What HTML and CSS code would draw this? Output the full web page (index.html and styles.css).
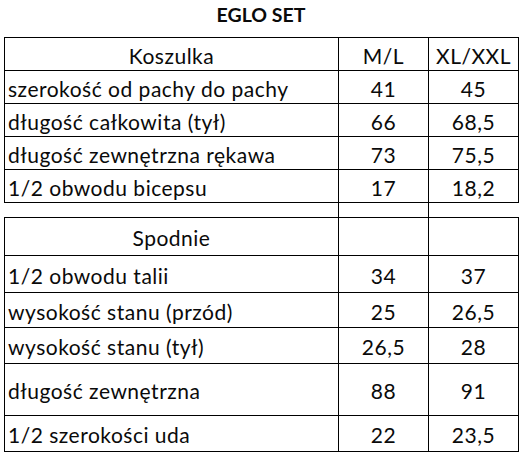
FILE: index.html
```html
<!DOCTYPE html>
<html lang="pl">
<head>
<meta charset="utf-8">
<link rel="stylesheet" href="styles.css">
</head>
<body>
<h1 class="title">EGLO SET</h1>
<table class="sizes">
  <colgroup>
    <col class="c-name">
    <col class="c-ml">
    <col class="c-xl">
  </colgroup>
  <tr class="r-head">
    <td class="head">Koszulka</td>
    <td>M/L</td>
    <td>XL/XXL</td>
  </tr>
  <tr class="r1"><td class="name">szerokość od pachy do pachy</td><td>41</td><td>45</td></tr>
  <tr class="r2"><td class="name">długość całkowita (tył)</td><td>66</td><td>68,5</td></tr>
  <tr class="r3"><td class="name">długość zewnętrzna rękawa</td><td>73</td><td>75,5</td></tr>
  <tr class="r4"><td class="name">1/2 obwodu bicepsu</td><td>17</td><td>18,2</td></tr>
  <tr class="gap"><td></td><td></td><td></td></tr>
  <tr class="r-head2">
    <td class="head">Spodnie</td>
    <td></td>
    <td></td>
  </tr>
  <tr class="p1"><td class="name">1/2 obwodu talii</td><td>34</td><td>37</td></tr>
  <tr class="p2"><td class="name">wysokość stanu (przód)</td><td>25</td><td>26,5</td></tr>
  <tr class="p3"><td class="name">wysokość stanu (tył)</td><td>26,5</td><td>28</td></tr>
  <tr class="p4"><td class="name">długość zewnętrzna</td><td>88</td><td>91</td></tr>
  <tr class="p5"><td class="name">1/2 szerokości uda</td><td>22</td><td>23,5</td></tr>
</table>
</body>
</html>
```
FILE: styles.css
```css
html, body {
  margin: 0;
  padding: 0;
  background: #fff;
}
body {
  font-family: Lato, "Open Sans", sans-serif;
  color: #0a0a0a;
  width: 525px;
}
.title {
  margin: 0 0 0 4px;
  width: 514px;
  height: 37px;
  padding-top: 3px;
  box-sizing: border-box;
  text-align: center;
  font-size: 19.5px;
  font-weight: 700;
  line-height: 24px;
}
.sizes {
  border-collapse: collapse;
  margin-left: 4px;
  width: 514px;
  table-layout: fixed;
  font-size: 21px;
  letter-spacing: 0.5px;
}
.c-name { width: 334px; }
.c-ml { width: 90px; }
.c-xl { width: 90px; }
.sizes td {
  border: 1px solid #000;
  padding: 3px 3px 0 3px;
  text-align: center;
  vertical-align: middle;
  line-height: 24px;
  white-space: nowrap;
}
.sizes td.name { text-align: left; }
.r-head td { height: 29px; }
.r1 td, .r2 td, .r3 td, .r4 td { height: 29px; }
.gap td { height: 14px; padding: 0; }
.gap td:first-child { border-left: none; }
.gap td:last-child { border-right: none; }
.r-head2 td { height: 34px; }
.p1 td { height: 33px; }
.p2 td { height: 31px; }
.p3 td { height: 32px; }
.p4 td { height: 48px; }
.p5 td { height: 32px; }
```
